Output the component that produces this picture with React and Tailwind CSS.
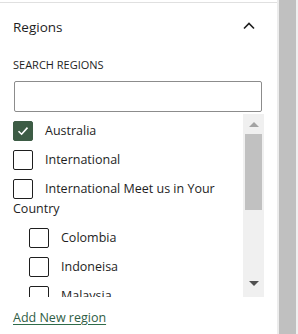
import React from "react";

function Box({ checked }) {
  return (
    <span
      className={
        "inline-flex w-5 h-5 items-center justify-center rounded-[2px] align-top mr-3 " +
        (checked ? "bg-[#3d5c45] border border-[#3d5c45]" : "border border-[#1e1e1e] bg-white")
      }
    >
      {checked && (
        <svg width="14" height="14" viewBox="0 0 14 14" fill="none">
          <path d="M2.5 7.2 L5.6 10.2 L11.5 3.6" stroke="white" strokeWidth="1.6" />
        </svg>
      )}
    </span>
  );
}

function Item({ label, checked, child }) {
  return (
    <div className={"leading-[20px] mb-[9px] " + (child ? "pl-4" : "")}>
      <Box checked={checked} />
      <span className="align-top">{label}</span>
    </div>
  );
}

export default function App() {
  return (
    <div
      className="w-[298px] h-[334px] flex bg-white overflow-hidden text-[#1e1e1e]"
      style={{ fontFamily: "'Open Sans', 'Noto Sans', sans-serif" }}
    >
      <div className="w-[277px] pt-[2px]">
        <div className="border-t border-[#e0e0e0] h-full px-[13px]">
          <div className="flex items-center justify-between pt-[13px] h-[35px]">
            <span className="text-[13.5px] font-medium">Regions</span>
            <svg width="12" height="8" viewBox="0 0 12 8" className="mr-[9px] mt-[-3px]" fill="none">
              <path d="M1 6.5 L6 1.5 L11 6.5" stroke="#1e1e1e" strokeWidth="1.6" />
            </svg>
          </div>
          <div className="mt-[19px] text-[11px] font-medium uppercase leading-[16px]">Search Regions</div>
          <div className="mt-[8px] ml-[1px] w-[248px] h-[31px] border border-[#8c8c8c] rounded-[2px]" />
          <div className="flex mt-[2px] h-[183px]">
            <div className="flex-1 overflow-hidden pt-[7px] text-[12.5px]">
              <Item label="Australia" checked />
              <Item label="International" />
              <Item label="International Meet us in Your Country" />
              <Item label="Colombia" child />
              <Item label="Indoneisa" child />
              <Item label="Malaysia" child />
            </div>
            <div className="w-[21px] bg-[#f0f0f0] flex flex-col items-center">
              <svg width="10" height="6" viewBox="0 0 10 6" className="mt-[8px]">
                <path d="M0 5 L5 0 L10 5 Z" fill="#a3a3a3" />
              </svg>
              <div className="mt-[6px] w-[17px] h-[76px] bg-[#c1c1c1]" />
              <div className="flex-1" />
              <svg width="10" height="6" viewBox="0 0 10 6" className="mb-[10px]">
                <path d="M0 0 L10 0 L5 5 Z" fill="#505050" />
              </svg>
            </div>
          </div>
          <a className="block mt-[12px] text-[12.5px] underline text-[#2f5d45] decoration-[#2f6b4a] underline-offset-2">
            Add New region
          </a>
        </div>
      </div>
      <div className="w-[2px] bg-[#ececec]" />
      <div className="w-[17px] bg-[#c0c0c0]" />
      <div className="flex-1 bg-[#f0f0f0]" />
    </div>
  );
}
